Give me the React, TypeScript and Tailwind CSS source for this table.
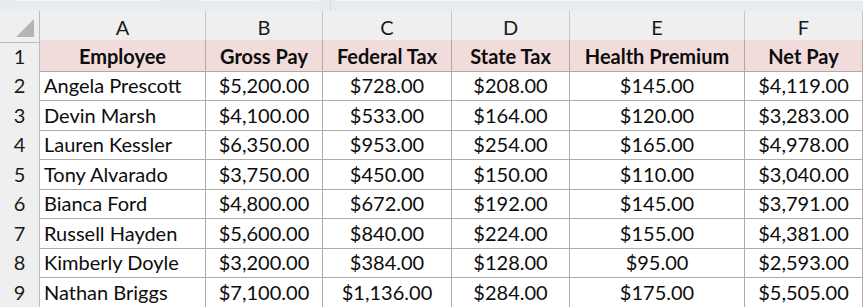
import React from "react";

const cols = ["A", "B", "C", "D", "E", "F"];
const headers = ["Employee", "Gross Pay", "Federal Tax", "State Tax", "Health Premium", "Net Pay"];
const rows: string[][] = [
  ["Angela Prescott", "$5,200.00", "$728.00", "$208.00", "$145.00", "$4,119.00"],
  ["Devin Marsh", "$4,100.00", "$533.00", "$164.00", "$120.00", "$3,283.00"],
  ["Lauren Kessler", "$6,350.00", "$953.00", "$254.00", "$165.00", "$4,978.00"],
  ["Tony Alvarado", "$3,750.00", "$450.00", "$150.00", "$110.00", "$3,040.00"],
  ["Bianca Ford", "$4,800.00", "$672.00", "$192.00", "$145.00", "$3,791.00"],
  ["Russell Hayden", "$5,600.00", "$840.00", "$224.00", "$155.00", "$4,381.00"],
  ["Kimberly Doyle", "$3,200.00", "$384.00", "$128.00", "$95.00", "$2,593.00"],
  ["Nathan Briggs", "$7,100.00", "$1,136.00", "$284.00", "$175.00", "$5,505.00"],
];

const gridCols = "grid grid-cols-[40px_166px_117px_129px_118px_175px_118px_1fr]";

export default function App() {
  return (
    <div
      className="w-[863px] h-[307px] overflow-hidden bg-white text-[#0d0d0d]"
      style={{ fontFamily: "Lato, 'Open Sans', sans-serif" }}
    >
      {/* top strip */}
      <div className="h-[11px] bg-[#e9ecef] flex">
        <div className="w-[17px]" />
        <div className="w-[143px] h-[1px] bg-[#f6f7f8]" />
        <div className="w-[40px]" />
        <div className="w-[118px] h-[1px] bg-[#f6f7f8]" />
        <div className="w-[12px]" />
        <div className="w-[1px] h-[11px] bg-[#d6d9dc]" />
        <div className="w-[4px]" />
        <div className="flex-1 h-[1px] bg-[#f6f7f8]" />
      </div>
      {/* column headers */}
      <div className={`${gridCols} h-[29px] bg-[#efefef] text-[20px] text-[#1a1a1a]`}>
        <div className="relative border-r border-b border-[#bdbdbd]">
          <div className="absolute right-[5px] bottom-[5px] w-0 h-0 border-l-[18px] border-l-transparent border-b-[18px] border-b-[#b5b5b5]" />
        </div>
        {cols.map((c) => (
          <div key={c} className="flex items-center justify-center pt-[1px] border-r border-b border-[#c8c8c8]">
            {c}
          </div>
        ))}
        <div className="border-b border-[#c8c8c8]" />
      </div>
      {/* row 1 header */}
      <div className={`${gridCols} h-[29.45px] text-[20px]`}>
        <div className="flex items-center justify-center pt-[1px] bg-[#efefef] text-[#1a1a1a] border-r border-b border-[#bdbdbd]">1</div>
        {headers.map((h) => (
          <div key={h} className="flex items-center justify-center pt-[1px] bg-[#f2dcdb] font-bold border-r border-b border-[#ababab] whitespace-nowrap">
            {h}
          </div>
        ))}
        <div className="border-b border-[#ababab]" />
      </div>
      {rows.map((r, i) => (
        <div key={i} className={`${gridCols} h-[29.45px] text-[20px]`}>
          <div className="flex items-center justify-center pt-[1px] bg-[#efefef] text-[#1a1a1a] border-r border-b border-[#bdbdbd]">{i + 2}</div>
          {r.map((v, j) => (
            <div
              key={j}
              className={`flex items-center pt-[1px] ${j === 0 ? "justify-start pl-[4px]" : "justify-center"} border-r border-b border-[#ababab] whitespace-nowrap`}
            >
              {v}
            </div>
          ))}
          <div className="border-b border-[#ababab]" />
        </div>
      ))}
    </div>
  );
}
